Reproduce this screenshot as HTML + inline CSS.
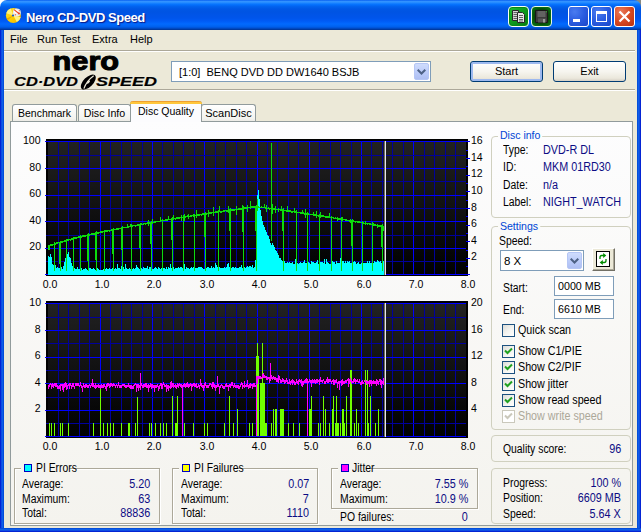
<!DOCTYPE html>
<html><head><meta charset="utf-8"><title>Nero CD-DVD Speed</title>
<style>
*{box-sizing:border-box;margin:0;padding:0}
html,body{width:641px;height:532px;overflow:hidden;background:#ece9d8}
body{font-family:"Liberation Sans",Arial,sans-serif;font-size:11px;color:#000;position:relative}
.abs,.win *{position:absolute}
.win{position:absolute;left:0;top:0;width:641px;height:532px;background:#ece9d8;overflow:hidden}
.title{left:0;top:0;width:641px;height:30px;border-radius:7px 7px 0 0;
 background:linear-gradient(to bottom,#0058ee 0%,#3593ff 4%,#288eff 8%,#127dff 12%,#036ffc 16%,#0262ee 22%,#0057e5 30%,#0054e3 40%,#0055eb 60%,#005bf5 70%,#026afe 80%,#0062ef 88%,#0052d6 93%,#0040ab 97%,#003092 100%)}
.corner{left:0;top:0;width:641px;height:10px;background:linear-gradient(to right,#fff 50%,#8a8a80 50%)}
.ttext{left:26px;top:9px;height:18px;line-height:18px;color:#fff;font-weight:bold;font-size:13px;text-shadow:1px 1px 1px #0a1883;white-space:nowrap;letter-spacing:-0.45px}
.bl{left:0;top:30px;width:4px;height:502px;background:linear-gradient(to right,#0019cf 0,#0831d9 25%,#166aee 50%,#0855dd 75%,#0046d8 100%)}
.br{right:0;top:30px;width:4px;height:502px;background:linear-gradient(to left,#0019cf 0,#0831d9 25%,#166aee 50%,#0855dd 75%,#0046d8 100%)}
.bb{left:0;bottom:0;width:641px;height:4px;background:linear-gradient(to top,#0019cf 0,#0831d9 25%,#166aee 50%,#0855dd 75%,#0046d8 100%)}
.menu span{top:31px;height:16px;line-height:16px;white-space:nowrap}
.etch{left:4px;width:631px;height:2px;border-top:1px solid #aca899;border-bottom:1px solid #fff}
.t{white-space:nowrap;height:14px;line-height:14px;font-size:12px;transform-origin:0 50%;transform:scaleX(.865)}
.t.nv{transform:scaleX(.9)}
.t.r{transform-origin:100% 50%}
.t.ck{transform:scaleX(.894)}
.t.n1{transform:none}
.ax{white-space:nowrap;height:14px;line-height:14px;font-size:11.7px;transform:scaleX(.9)}
.nv{color:#0c0c84}
.charts{left:0;top:0}
.page{left:10px;top:121px;width:623px;height:405px;border:1px solid #919b9c;background:linear-gradient(to bottom,#fdfdfe 0,#f4f3ee 100%)}
.tab{border:1px solid #919b9c;border-bottom:none;border-radius:3px 3px 0 0;background:linear-gradient(to bottom,#fff 0,#f3f3ee 85%,#ecebe6 100%);text-align:center;line-height:17px;white-space:nowrap}
.tabsel{background:#fcfcfe;border-top:none}
.tabsel i{left:-1px;top:0;right:-1px;height:3px;background:linear-gradient(to bottom,#e68b2c 0,#ffc73c 50%,#ffc73c 100%);border-radius:3px 3px 0 0}
.combo{border:1px solid #7f9db9;background:#fff}
.dd{background:linear-gradient(to bottom,#cfdcfd 0,#bdcdfa 50%,#aebff3 100%);border:1px solid #b5c6f5;border-radius:2px}
.btn{border:1px solid #003c74;border-radius:3px;background:linear-gradient(to bottom,#fff 0,#f6f5ef 50%,#ebe8dc 85%,#d6d0c5 100%);text-align:center;line-height:19px}
.gb{border:1px solid #d0d0bf;border-radius:4px}
.lg{color:#0046d5;background:#fcfcfd;padding:0 2px;transform-origin:0 50%;transform:scaleX(.96);white-space:nowrap;height:14px;line-height:14px}
.sq{border:1px solid #aca899;box-shadow:1px 1px 0 #fff, inset 1px 1px 0 #fff}
.inp{border:1px solid #7f9db9;background:#fff}
.cb{width:13px;height:13px;border:1px solid #1c5180;background:linear-gradient(135deg,#dcdcd7 0,#f3f3ef 50%,#fff 100%)}
.r{text-align:right}
</style></head><body>
<div class="win">
<div class="corner"></div>
<div class="title"></div>
<div class="bl"></div><div class="br"></div><div class="bb"></div>
<svg style="left:4px;top:6px" width="20" height="20" viewBox="4 6 20 20"><defs><linearGradient id="dg" x1="0" y1="0" x2="1" y2="1"><stop offset="0" stop-color="#ffe030"/><stop offset="0.5" stop-color="#ffd000"/><stop offset="1" stop-color="#f0b000"/></linearGradient></defs><circle cx="13.4" cy="15.4" r="7.5" fill="url(#dg)"/><path d="M13.4 15.4L6.2 13.2A7.5 7.5 0 0 1 10.6 8.5Z" fill="#fff27a"/><path d="M13.4 15.4L20.7 17.2A7.5 7.5 0 0 1 16.8 22.1Z" fill="#fff27a"/><path d="M13.4 15.4L6.6 18.6L7.6 20.2Z" fill="#e8a800"/><circle cx="16.8" cy="12.4" r="4" fill="#ecebe6"/><circle cx="16.2" cy="11.6" r="2.2" fill="#fff"/><path d="M14 9.6L19.2 13.8" stroke="#f04020" stroke-width="1.1"/><circle cx="19" cy="13.6" r="1" fill="#f04020"/><circle cx="15.4" cy="14.8" r="0.7" fill="#f07050"/><circle cx="19.4" cy="10.6" r="0.6" fill="#f07050"/><circle cx="13" cy="15.5" r="1.1" fill="#1c5ad0"/></svg>

<div class="ttext">Nero CD-DVD Speed</div>
<div style="left:508px;top:6px;width:21px;height:21px;border-radius:4px;border:1px solid #f4fff4;background:linear-gradient(135deg,#22c034 0,#10a020 40%,#047a10 100%);box-shadow:inset 0 0 0 1px #0a8a16"><svg style="left:3px;top:3px" width="14" height="14" viewBox="0 0 14 14"><path d="M0.5 0.5H6.5V10.5H0.5Z" fill="#d4d4d4" stroke="#282828"/><path d="M1.5 2.5H5.5M1.5 4.5H5.5M1.5 6.5H5.5M1.5 8.5H5.5" stroke="#606060"/><path d="M5.5 2.5H10.5L12.5 4.5V12.5H5.5Z" fill="#e8e8e8" stroke="#282828"/><path d="M7 5.5H11M7 7.5H11M7 9.5H11M7 11H11" stroke="#606060"/></svg></div>
<div style="left:531px;top:6px;width:21px;height:21px;border-radius:4px;border:1px solid #e8f8e8;background:radial-gradient(ellipse at 50% 50%,#053005 0,#064a08 55%,#0a8a16 100%);box-shadow:inset 0 0 0 1px #0a6a10"><svg style="left:3px;top:3px" width="14" height="14" viewBox="0 0 14 14"><path d="M0.5 0.5H12.5V12.5H0.5Z" fill="#3c3c3c" stroke="#181818"/><rect x="2.5" y="1" width="8" height="6" fill="#626262"/><rect x="3" y="8.5" width="8" height="4" fill="#565656"/><rect x="8" y="9" width="2" height="3.5" fill="#9a9a9a"/><rect x="11" y="1.3" width="1" height="1" fill="#30c030"/></svg></div>
<div class="cbtn" style="left:568px;top:6px;width:21px;height:21px;border-radius:3px;border:1px solid #fff;background:radial-gradient(circle at 30% 25%,#4a7cf0 0,#2a5ce0 50%,#1a46c8 100%)"><div style="left:4px;top:12px;width:7px;height:3px;background:#fff"></div></div>
<div class="cbtn" style="left:591px;top:6px;width:21px;height:21px;border-radius:3px;border:1px solid #fff;background:radial-gradient(circle at 30% 25%,#4a7cf0 0,#2a5ce0 50%,#1a46c8 100%)"><div style="left:4px;top:4px;width:11px;height:11px;border:1px solid #fff;border-top-width:3px"></div></div>
<div class="cbtn" style="left:614px;top:6px;width:21px;height:21px;border-radius:3px;border:1px solid #fff;background:radial-gradient(circle at 30% 25%,#ea7a5a 0,#d84a22 50%,#b8300e 100%)"><svg style="left:3px;top:3px" width="13" height="13" viewBox="0 0 13 13"><path d="M1.5 1.5L11.5 11.5M11.5 1.5L1.5 11.5" stroke="#fff" stroke-width="2.2"/></svg></div>

<div class="menu"><span style="left:10px">File</span><span style="left:37px">Run Test</span><span style="left:92px">Extra</span><span style="left:130px">Help</span></div>
<div class="etch" style="top:50px"></div>
<div class="etch" style="top:89px"></div>
<svg style="left:8px;top:51px" width="160" height="40" viewBox="8 51 160 40" font-family="'Liberation Sans',Arial,sans-serif" font-weight="bold"><text x="52.6" y="70.4" font-size="26.6" textLength="66.5" lengthAdjust="spacingAndGlyphs" stroke="#000" stroke-width="1.1" stroke-linejoin="round">nero</text><g font-style="italic" font-size="12" stroke="#000" stroke-width="0.15"><text x="14" y="86.3" textLength="64" lengthAdjust="spacingAndGlyphs">CD·DVD</text><text x="96" y="86.3" textLength="61" lengthAdjust="spacingAndGlyphs">SPEED</text></g><g transform="rotate(-45 88.3 82)"><ellipse cx="88.3" cy="82" rx="9.4" ry="4.8" fill="#000"/><path d="M80.5 83.6Q88 80 96.5 81.4" fill="none" stroke="#ece9d8" stroke-width="1.2"/><ellipse cx="88.3" cy="82.2" rx="2" ry="0.9" fill="#ece9d8"/></g></svg>

<div class="combo" style="left:171px;top:61px;width:260px;height:21px"><div class="t n1" style="left:7px;top:3px;font-size:11px">[1:0]&nbsp; BENQ DVD DD DW1640 BSJB</div><div class="dd" style="right:1px;top:1px;width:15px;height:17px"><svg style="left:2px;top:5px" width="9" height="6" viewBox="0 0 9 6"><path d="M0.7 0.7L4.5 4.5L8.3 0.7" fill="none" stroke="#4d6185" stroke-width="2"/></svg></div></div>
<div class="btn" style="left:470px;top:61px;width:73px;height:21px;box-shadow:inset 0 0 0 2px #9db9ef"><span style="left:0;right:0;top:0">Start</span></div>
<div class="btn" style="left:553px;top:61px;width:73px;height:21px"><span style="left:0;right:0;top:0">Exit</span></div>

<div class="page"></div>
<div class="tab" style="left:12px;top:104px;width:65px;height:17px"><span style="left:0;right:0;top:0;transform:scaleX(.95)">Benchmark</span></div>
<div class="tab" style="left:78px;top:104px;width:53px;height:17px"><span style="left:0;right:0;top:0;transform:scaleX(.97)">Disc Info</span></div>
<div class="tab" style="left:201px;top:104px;width:55px;height:17px"><span style="left:0;right:0;top:0">ScanDisc</span></div>
<div class="tab tabsel" style="left:130px;top:101px;width:72px;height:21px"><i></i><span style="left:0;right:0;top:2px;transform:scaleX(.955)">Disc Quality</span></div>

<svg class="charts" width="641" height="532" viewBox="0 0 641 532" shape-rendering="crispEdges"><defs><linearGradient id="bg" x1="0" y1="0" x2="0" y2="1"><stop offset="0" stop-color="#222"/><stop offset="1" stop-color="#000"/></linearGradient></defs><g><rect x="46" y="139" width="422" height="137" fill="#000"/><rect x="48" y="141" width="418" height="134" fill="url(#bg)"/><rect x="58" y="141" width="1" height="134" fill="#00009c"/><rect x="68" y="141" width="1" height="134" fill="#00009c"/><rect x="79" y="141" width="1" height="134" fill="#00009c"/><rect x="89" y="141" width="1" height="134" fill="#00009c"/><rect x="100" y="141" width="1" height="134" fill="#0000ff"/><rect x="110" y="141" width="1" height="134" fill="#00009c"/><rect x="121" y="141" width="1" height="134" fill="#00009c"/><rect x="131" y="141" width="1" height="134" fill="#00009c"/><rect x="142" y="141" width="1" height="134" fill="#00009c"/><rect x="152" y="141" width="1" height="134" fill="#0000ff"/><rect x="162" y="141" width="1" height="134" fill="#00009c"/><rect x="173" y="141" width="1" height="134" fill="#00009c"/><rect x="183" y="141" width="1" height="134" fill="#00009c"/><rect x="194" y="141" width="1" height="134" fill="#00009c"/><rect x="204" y="141" width="1" height="134" fill="#0000ff"/><rect x="215" y="141" width="1" height="134" fill="#00009c"/><rect x="225" y="141" width="1" height="134" fill="#00009c"/><rect x="236" y="141" width="1" height="134" fill="#00009c"/><rect x="246" y="141" width="1" height="134" fill="#00009c"/><rect x="257" y="141" width="1" height="134" fill="#0000ff"/><rect x="267" y="141" width="1" height="134" fill="#00009c"/><rect x="277" y="141" width="1" height="134" fill="#00009c"/><rect x="288" y="141" width="1" height="134" fill="#00009c"/><rect x="298" y="141" width="1" height="134" fill="#00009c"/><rect x="309" y="141" width="1" height="134" fill="#0000ff"/><rect x="319" y="141" width="1" height="134" fill="#00009c"/><rect x="330" y="141" width="1" height="134" fill="#00009c"/><rect x="340" y="141" width="1" height="134" fill="#00009c"/><rect x="351" y="141" width="1" height="134" fill="#00009c"/><rect x="361" y="141" width="1" height="134" fill="#0000ff"/><rect x="371" y="141" width="1" height="134" fill="#00009c"/><rect x="382" y="141" width="1" height="134" fill="#00009c"/><rect x="392" y="141" width="1" height="134" fill="#00009c"/><rect x="403" y="141" width="1" height="134" fill="#00009c"/><rect x="413" y="141" width="1" height="134" fill="#0000ff"/><rect x="424" y="141" width="1" height="134" fill="#00009c"/><rect x="434" y="141" width="1" height="134" fill="#00009c"/><rect x="445" y="141" width="1" height="134" fill="#00009c"/><rect x="455" y="141" width="1" height="134" fill="#00009c"/><rect x="45" y="141" width="421" height="1" fill="#0000ff"/><rect x="46" y="155" width="420" height="1" fill="#00009c"/><rect x="45" y="168" width="421" height="1" fill="#0000ff"/><rect x="46" y="181" width="420" height="1" fill="#00009c"/><rect x="45" y="195" width="421" height="1" fill="#0000ff"/><rect x="46" y="208" width="420" height="1" fill="#00009c"/><rect x="45" y="221" width="421" height="1" fill="#0000ff"/><rect x="46" y="235" width="420" height="1" fill="#00009c"/><rect x="45" y="248" width="421" height="1" fill="#0000ff"/><rect x="46" y="261" width="420" height="1" fill="#00009c"/><rect x="45" y="274" width="421" height="1" fill="#0000ff"/><rect x="466" y="274" width="4" height="1" fill="#0000ff"/><rect x="466" y="266" width="2" height="1" fill="#0000ff"/><rect x="466" y="258" width="4" height="1" fill="#0000ff"/><rect x="466" y="250" width="2" height="1" fill="#0000ff"/><rect x="466" y="241" width="4" height="1" fill="#0000ff"/><rect x="466" y="233" width="2" height="1" fill="#0000ff"/><rect x="466" y="225" width="4" height="1" fill="#0000ff"/><rect x="466" y="216" width="2" height="1" fill="#0000ff"/><rect x="466" y="208" width="4" height="1" fill="#0000ff"/><rect x="466" y="200" width="2" height="1" fill="#0000ff"/><rect x="466" y="191" width="4" height="1" fill="#0000ff"/><rect x="466" y="183" width="2" height="1" fill="#0000ff"/><rect x="466" y="175" width="4" height="1" fill="#0000ff"/><rect x="466" y="166" width="2" height="1" fill="#0000ff"/><rect x="466" y="158" width="4" height="1" fill="#0000ff"/><rect x="466" y="150" width="2" height="1" fill="#0000ff"/><rect x="466" y="141" width="4" height="1" fill="#0000ff"/><path d="M48 274V255.7h1V256.7h1V253.9h1V257.1h1V264.4h1V264.9h1V265.8h1V264.5h1V267.9h1V266.7h1V267.8h1V267.7h1V266.7h1V267.2h1V268.9h1V265.7h1V261.8h1V258.2h1V256.2h1V253.7h1V252.3h1V257.4h1V258.4h1V262.7h1V265.9h1V269.9h1V268.4h1V268.9h1V269.3h1V267.4h1V268.6h1V269.4h1V269.1h1V268.4h1V269.6h1V268.9h1V268.5h1V267.9h1V269.1h1V269.7h1V269.9h1V268.3h1V268.1h1V268.5h1V268.7h1V268.1h1V268.9h1V269.8h1V268.5h1V268.1h1V269.0h1V269.8h1V269.5h1V269.7h1V269.6h1V269.0h1V269.6h1V268.6h1V268.0h1V269.2h1V269.0h1V267.7h1V269.4h1V269.2h1V268.4h1V269.7h1V268.9h1V267.6h1V268.5h1V263.5h1V267.9h1V267.9h1V268.8h1V266.0h1V269.1h1V266.8h1V269.3h1V264.1h1V268.2h1V269.0h1V268.7h1V267.7h1V268.5h1V269.3h1V268.7h1V267.7h1V269.4h1V268.3h1V264.7h1V267.3h1V267.9h1V268.6h1V267.7h1V267.7h1V268.9h1V267.2h1V267.6h1V267.7h1V268.2h1V266.4h1V268.7h1V267.2h1V267.2h1V267.2h1V268.8h1V268.8h1V267.8h1V267.4h1V267.8h1V269.0h1V267.2h1V267.5h1V268.8h1V268.4h1V267.0h1V268.2h1V267.5h1V268.8h1V267.1h1V268.7h1V266.9h1V268.3h1V263.8h1V267.6h1V266.9h1V267.1h1V268.5h1V268.3h1V267.7h1V268.0h1V266.9h1V267.9h1V266.9h1V266.9h1V267.7h1V268.8h1V264.1h1V268.5h1V267.2h1V268.1h1V267.6h1V268.6h1V268.2h1V267.1h1V267.5h1V266.7h1V267.4h1V267.6h1V267.7h1V267.6h1V267.2h1V266.6h1V267.4h1V266.8h1V268.4h1V268.5h1V268.5h1V266.9h1V268.3h1V267.1h1V266.6h1V268.1h1V267.7h1V266.4h1V268.2h1V267.4h1V268.1h1V263.2h1V264.5h1V267.1h1V268.3h1V266.7h1V268.2h1V268.3h1V267.8h1V267.5h1V266.6h1V268.0h1V267.1h1V264.1h1V262.6h1V266.9h1V268.1h1V268.1h1V267.3h1V267.0h1V267.7h1V267.1h1V268.0h1V268.1h1V267.5h1V266.5h1V267.1h1V264.7h1V268.1h1V266.9h1V267.1h1V267.9h1V267.2h1V266.3h1V267.0h1V265.9h1V266.2h1V266.6h1V264.9h1V267.9h1V267.4h1V260.0h1V208.0h1V195.0h1V190.2h1V199.1h1V209.6h1V215.7h1V221.0h1V225.2h1V227.0h1V230.0h1V231.6h1V234.5h1V235.8h1V238.7h1V242.7h1V244.7h1V243.2h1V245.0h1V247.0h1V250.0h1V251.2h1V253.2h1V255.3h1V257.9h1V258.2h1V260.4h1V260.8h1V261.9h1V261.4h1V262.5h1V262.7h1V262.3h1V262.7h1V262.1h1V263.3h1V262.9h1V262.2h1V263.9h1V264.4h1V259.2h1V262.1h1V262.6h1V264.4h1V263.3h1V262.3h1V263.0h1V262.7h1V261.8h1V259.9h1V263.0h1V262.8h1V259.6h1V262.4h1V263.0h1V264.4h1V261.3h1V262.4h1V262.3h1V263.1h1V263.1h1V262.2h1V260.3h1V263.7h1V263.6h1V261.9h1V262.4h1V262.4h1V262.9h1V259.2h1V263.8h1V258.6h1V261.9h1V263.0h1V263.7h1V263.7h1V263.9h1V261.4h1V261.8h1V261.6h1V263.5h1V260.8h1V262.7h1V263.3h1V263.1h1V258.1h1V261.6h1V261.4h1V261.4h1V263.0h1V261.1h1V263.0h1V261.0h1V261.5h1V261.2h1V263.2h1V263.4h1V261.1h1V261.5h1V261.2h1V262.3h1V263.8h1V262.6h1V262.0h1V263.7h1V263.5h1V262.8h1V261.6h1V263.0h1V262.9h1V262.6h1V263.3h1V261.0h1V263.1h1V260.7h1V263.3h1V263.4h1V263.4h1V262.9h1V261.0h1V262.4h1V262.0h1V260.0h1V260.7h1V262.1h1V261.0h1V262.7h1V262.3h1V260.7h1V258.8h1V261.4h1V275H48Z" fill="#00ffff"/><path d="M48 245.5h1.5V250h-1.5ZM48 244.90h1V246.72h-1ZM49 244.65h1V246.47h-1ZM50 243.99h1V245.80h-1ZM51 243.91h1V245.72h-1ZM52 243.93h1V245.74h-1ZM53 243.57h1V245.37h-1ZM54 243.28h1V245.08h-1ZM55 243.06h1V244.85h-1ZM56 242.33h1V244.12h-1ZM57 241.95h1V243.75h-1ZM58 241.69h1V243.48h-1ZM59 241.63h1V243.41h-1ZM60 241.44h1V243.22h-1ZM61 241.32h1V243.10h-1ZM62 240.91h1V242.68h-1ZM63 240.58h1V242.36h-1ZM64 240.38h1V242.16h-1ZM65 239.93h1V241.70h-1ZM66 239.71h1V241.48h-1ZM67 239.14h1V240.91h-1ZM68 239.32h1V241.08h-1ZM69 238.73h1V240.49h-1ZM70 238.88h1V240.64h-1ZM71 238.45h1V240.21h-1ZM72 237.99h1V239.75h-1ZM73 237.63h1V239.39h-1ZM74 237.45h1V239.21h-1ZM75 237.43h1V239.18h-1ZM76 237.22h1V238.97h-1ZM77 236.62h1V238.37h-1ZM78 236.35h1V238.09h-1ZM79 236.37h1V238.12h-1ZM80 236.17h1V237.91h-1ZM81 235.81h1V237.55h-1ZM82 235.47h1V237.21h-1ZM83 235.46h1V237.20h-1ZM84 234.87h1V236.60h-1ZM85 234.80h1V236.54h-1ZM86 234.67h1V236.40h-1ZM87 234.73h1V236.47h-1ZM88 234.31h1V236.04h-1ZM89 234.23h1V235.96h-1ZM90 233.75h1V235.48h-1ZM91 233.38h1V235.11h-1ZM92 233.16h1V234.89h-1ZM93 233.37h1V235.09h-1ZM94 232.99h1V234.71h-1ZM95 232.53h1V234.25h-1ZM96 232.13h1V233.86h-1ZM97 232.20h1V233.92h-1ZM98 232.09h1V233.81h-1ZM99 231.72h1V233.44h-1ZM100 231.40h1V233.12h-1ZM101 231.43h1V233.15h-1ZM102 231.37h1V233.09h-1ZM103 230.74h1V232.46h-1ZM104 230.41h1V232.13h-1ZM105 230.39h1V232.10h-1ZM106 230.23h1V231.94h-1ZM107 230.17h1V231.88h-1ZM108 229.68h1V231.38h-1ZM109 229.83h1V231.53h-1ZM110 229.59h1V231.29h-1ZM111 229.24h1V230.95h-1ZM112 228.86h1V230.56h-1ZM113 229.11h1V230.82h-1ZM114 228.52h1V230.22h-1ZM115 228.62h1V230.32h-1ZM116 228.07h1V229.77h-1ZM117 227.86h1V229.56h-1ZM118 227.99h1V229.68h-1ZM119 227.51h1V229.21h-1ZM120 227.71h1V229.40h-1ZM121 227.24h1V228.93h-1ZM122 226.86h1V228.55h-1ZM123 226.68h1V228.38h-1ZM124 226.61h1V228.30h-1ZM125 226.56h1V228.25h-1ZM126 226.54h1V228.23h-1ZM127 225.87h1V227.56h-1ZM128 225.82h1V227.52h-1ZM129 225.53h1V227.22h-1ZM130 225.79h1V227.48h-1ZM131 225.11h1V226.80h-1ZM132 224.87h1V226.55h-1ZM133 224.68h1V226.37h-1ZM134 224.70h1V226.38h-1ZM135 224.82h1V226.50h-1ZM136 224.62h1V226.31h-1ZM137 224.35h1V226.03h-1ZM138 224.32h1V226.01h-1ZM139 224.10h1V225.78h-1ZM140 223.56h1V225.24h-1ZM141 223.29h1V224.97h-1ZM142 223.56h1V225.24h-1ZM143 223.27h1V224.95h-1ZM144 222.66h1V224.34h-1ZM145 222.86h1V224.54h-1ZM146 222.51h1V224.19h-1ZM147 222.33h1V224.01h-1ZM148 222.13h1V223.80h-1ZM149 221.85h1V223.53h-1ZM150 221.58h1V223.25h-1ZM151 221.57h1V223.25h-1ZM152 221.44h1V223.11h-1ZM153 221.63h1V223.30h-1ZM154 220.96h1V222.63h-1ZM155 221.29h1V222.96h-1ZM156 220.66h1V222.33h-1ZM157 220.58h1V222.25h-1ZM158 220.69h1V222.36h-1ZM159 220.52h1V222.19h-1ZM160 220.11h1V221.78h-1ZM161 219.71h1V221.38h-1ZM162 219.80h1V221.47h-1ZM163 219.57h1V221.24h-1ZM164 219.73h1V221.40h-1ZM165 219.13h1V220.80h-1ZM166 219.06h1V220.73h-1ZM167 219.22h1V220.88h-1ZM168 218.53h1V220.20h-1ZM169 218.60h1V220.26h-1ZM170 218.67h1V220.34h-1ZM171 218.48h1V220.14h-1ZM172 217.88h1V219.54h-1ZM173 217.71h1V219.38h-1ZM174 217.57h1V219.23h-1ZM175 217.92h1V219.58h-1ZM176 217.36h1V219.02h-1ZM177 217.49h1V219.16h-1ZM178 217.42h1V219.08h-1ZM179 216.93h1V218.59h-1ZM180 216.73h1V218.39h-1ZM181 216.98h1V218.64h-1ZM182 216.62h1V218.28h-1ZM183 216.25h1V217.90h-1ZM184 216.36h1V218.02h-1ZM185 215.96h1V217.62h-1ZM186 215.78h1V217.44h-1ZM187 215.46h1V217.12h-1ZM188 215.76h1V217.41h-1ZM189 215.70h1V217.35h-1ZM190 215.37h1V217.03h-1ZM191 215.40h1V217.06h-1ZM192 214.70h1V216.35h-1ZM193 214.67h1V216.32h-1ZM194 214.66h1V216.31h-1ZM195 214.79h1V216.45h-1ZM196 214.64h1V216.29h-1ZM197 214.14h1V215.80h-1ZM198 213.91h1V215.56h-1ZM199 213.87h1V215.52h-1ZM200 213.75h1V215.40h-1ZM201 213.86h1V215.51h-1ZM202 213.27h1V214.92h-1ZM203 213.49h1V215.14h-1ZM204 213.30h1V214.95h-1ZM205 213.20h1V214.85h-1ZM206 213.02h1V214.67h-1ZM207 212.77h1V214.42h-1ZM208 212.46h1V214.10h-1ZM209 212.30h1V213.95h-1ZM210 212.18h1V213.83h-1ZM211 212.28h1V213.93h-1ZM212 211.72h1V213.36h-1ZM213 211.64h1V213.29h-1ZM214 211.83h1V213.47h-1ZM215 211.38h1V213.02h-1ZM216 211.12h1V212.77h-1ZM217 210.96h1V212.60h-1ZM218 211.12h1V212.77h-1ZM219 210.84h1V212.49h-1ZM220 211.09h1V212.74h-1ZM221 210.89h1V212.53h-1ZM222 210.81h1V212.45h-1ZM223 210.23h1V211.88h-1ZM224 209.98h1V211.62h-1ZM225 209.85h1V211.49h-1ZM226 209.94h1V211.59h-1ZM227 209.93h1V211.57h-1ZM228 209.63h1V211.27h-1ZM229 209.36h1V211.00h-1ZM230 209.33h1V210.97h-1ZM231 209.31h1V210.95h-1ZM232 209.20h1V210.84h-1ZM233 209.11h1V210.75h-1ZM234 209.03h1V210.67h-1ZM235 208.78h1V210.42h-1ZM236 208.31h1V209.95h-1ZM237 208.60h1V210.24h-1ZM238 208.14h1V209.78h-1ZM239 208.16h1V209.80h-1ZM240 207.91h1V209.55h-1ZM241 207.99h1V209.63h-1ZM242 207.53h1V209.17h-1ZM243 207.42h1V209.06h-1ZM244 207.28h1V208.92h-1ZM245 207.09h1V208.73h-1ZM246 207.39h1V209.03h-1ZM247 207.07h1V208.71h-1ZM248 206.79h1V208.42h-1ZM249 206.69h1V208.33h-1ZM250 206.92h1V208.55h-1ZM251 206.49h1V208.12h-1ZM252 206.19h1V207.82h-1ZM253 206.40h1V208.04h-1ZM254 206.17h1V207.81h-1ZM255 206.24h1V207.88h-1ZM256 205.71h1V207.29h-1ZM257 206.01h1V207.64h-1ZM258 206.35h1V207.98h-1ZM259 206.50h1V208.13h-1ZM260 206.68h1V208.31h-1ZM261 206.29h1V207.92h-1ZM262 206.57h1V208.21h-1ZM263 206.60h1V208.24h-1ZM264 206.78h1V208.42h-1ZM265 207.39h1V209.02h-1ZM266 207.29h1V208.93h-1ZM267 207.63h1V209.27h-1ZM268 207.44h1V209.07h-1ZM269 207.87h1V209.51h-1ZM270 207.76h1V209.39h-1ZM271 207.78h1V209.42h-1ZM272 208.23h1V209.87h-1ZM273 208.47h1V210.11h-1ZM274 208.10h1V209.74h-1ZM275 208.54h1V210.18h-1ZM276 208.69h1V210.33h-1ZM277 208.59h1V210.23h-1ZM278 208.82h1V210.46h-1ZM279 208.82h1V210.46h-1ZM280 209.00h1V210.64h-1ZM281 209.17h1V210.81h-1ZM282 209.52h1V211.16h-1ZM283 209.69h1V211.33h-1ZM284 209.56h1V211.21h-1ZM285 209.59h1V211.23h-1ZM286 209.92h1V211.56h-1ZM287 210.28h1V211.92h-1ZM288 210.12h1V211.77h-1ZM289 210.34h1V211.99h-1ZM290 210.42h1V212.06h-1ZM291 210.92h1V212.56h-1ZM292 210.92h1V212.56h-1ZM293 210.77h1V212.41h-1ZM294 210.94h1V212.58h-1ZM295 211.26h1V212.90h-1ZM296 211.50h1V213.14h-1ZM297 211.70h1V213.34h-1ZM298 211.51h1V213.16h-1ZM299 211.70h1V213.35h-1ZM300 212.17h1V213.82h-1ZM301 212.15h1V213.79h-1ZM302 212.22h1V213.86h-1ZM303 212.38h1V214.03h-1ZM304 212.92h1V214.56h-1ZM305 212.68h1V214.33h-1ZM306 212.98h1V214.63h-1ZM307 213.00h1V214.65h-1ZM308 213.19h1V214.84h-1ZM309 213.61h1V215.26h-1ZM310 213.84h1V215.49h-1ZM311 213.61h1V215.26h-1ZM312 213.66h1V215.31h-1ZM313 214.13h1V215.78h-1ZM314 213.97h1V215.62h-1ZM315 214.00h1V215.66h-1ZM316 214.69h1V216.35h-1ZM317 214.56h1V216.21h-1ZM318 214.95h1V216.61h-1ZM319 214.86h1V216.51h-1ZM320 215.30h1V216.95h-1ZM321 215.20h1V216.86h-1ZM322 215.18h1V216.83h-1ZM323 215.24h1V216.90h-1ZM324 215.72h1V217.38h-1ZM325 215.93h1V217.59h-1ZM326 216.25h1V217.91h-1ZM327 215.91h1V217.57h-1ZM328 216.39h1V218.05h-1ZM329 216.40h1V218.06h-1ZM330 216.64h1V218.30h-1ZM331 216.58h1V218.24h-1ZM332 216.83h1V218.49h-1ZM333 217.13h1V218.79h-1ZM334 217.53h1V219.19h-1ZM335 217.20h1V218.86h-1ZM336 217.59h1V219.26h-1ZM337 217.94h1V219.61h-1ZM338 218.20h1V219.87h-1ZM339 217.90h1V219.57h-1ZM340 218.03h1V219.69h-1ZM341 218.68h1V220.34h-1ZM342 218.86h1V220.53h-1ZM343 218.73h1V220.40h-1ZM344 218.64h1V220.31h-1ZM345 219.33h1V221.00h-1ZM346 219.17h1V220.84h-1ZM347 219.65h1V221.32h-1ZM348 219.65h1V221.32h-1ZM349 219.94h1V221.61h-1ZM350 219.71h1V221.38h-1ZM351 220.25h1V221.92h-1ZM352 220.08h1V221.75h-1ZM353 220.36h1V222.03h-1ZM354 220.80h1V222.47h-1ZM355 220.96h1V222.63h-1ZM356 220.74h1V222.42h-1ZM357 220.94h1V222.61h-1ZM358 221.22h1V222.89h-1ZM359 221.46h1V223.14h-1ZM360 221.56h1V223.23h-1ZM361 221.58h1V223.25h-1ZM362 221.82h1V223.50h-1ZM363 222.29h1V223.96h-1ZM364 222.57h1V224.24h-1ZM365 222.23h1V223.91h-1ZM366 222.72h1V224.40h-1ZM367 223.02h1V224.70h-1ZM368 222.76h1V224.44h-1ZM369 223.42h1V225.10h-1ZM370 223.17h1V224.85h-1ZM371 223.64h1V225.32h-1ZM372 223.79h1V225.48h-1ZM373 224.02h1V225.70h-1ZM374 224.01h1V225.70h-1ZM375 224.26h1V225.95h-1ZM376 224.55h1V226.23h-1ZM377 224.64h1V226.32h-1ZM378 224.96h1V226.65h-1ZM379 225.02h1V226.71h-1ZM380 225.20h1V226.89h-1ZM381 225.14h1V226.83h-1ZM382 225.69h1V227.38h-1ZM383 225.80h1V227.49h-1ZM383 226.6h1.5v4.5h-1.5Z" fill="#0cdc0c"/><line x1="54.5" y1="242.3" x2="54.5" y2="271" stroke="#0cdc0c" stroke-width="1"/><line x1="60.5" y1="240.5" x2="60.5" y2="271" stroke="#0cdc0c" stroke-width="1"/><line x1="60.0" y1="241.5" x2="60.0" y2="264.3" stroke="#0cdc0c" stroke-width="2.2"/><line x1="66.5" y1="238.6" x2="66.5" y2="271" stroke="#0cdc0c" stroke-width="1"/><line x1="73.5" y1="236.8" x2="73.5" y2="271" stroke="#0cdc0c" stroke-width="1"/><line x1="80.5" y1="235.2" x2="80.5" y2="271" stroke="#0cdc0c" stroke-width="1"/><line x1="88.5" y1="233.3" x2="88.5" y2="271" stroke="#0cdc0c" stroke-width="1"/><line x1="88.0" y1="234.3" x2="88.0" y2="261.4" stroke="#0cdc0c" stroke-width="2.2"/><line x1="96.5" y1="231.4" x2="96.5" y2="271" stroke="#0cdc0c" stroke-width="1"/><line x1="96.0" y1="232.4" x2="96.0" y2="259.6" stroke="#0cdc0c" stroke-width="2.2"/><line x1="104.5" y1="229.6" x2="104.5" y2="271" stroke="#0cdc0c" stroke-width="1"/><line x1="113.5" y1="227.8" x2="113.5" y2="271" stroke="#0cdc0c" stroke-width="1"/><line x1="113.0" y1="228.8" x2="113.0" y2="253.5" stroke="#0cdc0c" stroke-width="2.2"/><line x1="122.5" y1="226.1" x2="122.5" y2="271" stroke="#0cdc0c" stroke-width="1"/><line x1="122.0" y1="227.1" x2="122.0" y2="249.5" stroke="#0cdc0c" stroke-width="2.2"/><line x1="131.5" y1="224.2" x2="131.5" y2="271" stroke="#0cdc0c" stroke-width="1"/><line x1="140.5" y1="222.6" x2="140.5" y2="271" stroke="#0cdc0c" stroke-width="1"/><line x1="140.0" y1="223.6" x2="140.0" y2="248.4" stroke="#0cdc0c" stroke-width="2.2"/><line x1="151.5" y1="220.6" x2="151.5" y2="271" stroke="#0cdc0c" stroke-width="1"/><line x1="151.0" y1="221.6" x2="151.0" y2="243.5" stroke="#0cdc0c" stroke-width="2.2"/><line x1="162.5" y1="218.8" x2="162.5" y2="271" stroke="#0cdc0c" stroke-width="1"/><line x1="172.5" y1="217.0" x2="172.5" y2="271" stroke="#0cdc0c" stroke-width="1"/><line x1="172.0" y1="218.0" x2="172.0" y2="240.1" stroke="#0cdc0c" stroke-width="2.2"/><line x1="183.5" y1="215.3" x2="183.5" y2="271" stroke="#0cdc0c" stroke-width="1"/><line x1="194.5" y1="213.6" x2="194.5" y2="271" stroke="#0cdc0c" stroke-width="1"/><line x1="205.5" y1="211.8" x2="205.5" y2="271" stroke="#0cdc0c" stroke-width="1"/><line x1="205.0" y1="212.8" x2="205.0" y2="237.3" stroke="#0cdc0c" stroke-width="2.2"/><line x1="218.5" y1="210.1" x2="218.5" y2="271" stroke="#0cdc0c" stroke-width="1"/><line x1="230.5" y1="208.3" x2="230.5" y2="271" stroke="#0cdc0c" stroke-width="1"/><line x1="230.0" y1="209.3" x2="230.0" y2="231.0" stroke="#0cdc0c" stroke-width="2.2"/><line x1="243.5" y1="206.4" x2="243.5" y2="271" stroke="#0cdc0c" stroke-width="1"/><line x1="243.0" y1="207.4" x2="243.0" y2="232.0" stroke="#0cdc0c" stroke-width="2.2"/><line x1="256.5" y1="204.7" x2="256.5" y2="271" stroke="#0cdc0c" stroke-width="1"/><line x1="256.0" y1="205.7" x2="256.0" y2="230.8" stroke="#0cdc0c" stroke-width="2.2"/><line x1="283.5" y1="208.3" x2="283.5" y2="271" stroke="#0cdc0c" stroke-width="1"/><line x1="283.0" y1="209.3" x2="283.0" y2="230.6" stroke="#0cdc0c" stroke-width="2.2"/><line x1="296.5" y1="210.1" x2="296.5" y2="271" stroke="#0cdc0c" stroke-width="1"/><line x1="307.5" y1="211.8" x2="307.5" y2="271" stroke="#0cdc0c" stroke-width="1"/><line x1="319.5" y1="213.7" x2="319.5" y2="271" stroke="#0cdc0c" stroke-width="1"/><line x1="331.5" y1="215.5" x2="331.5" y2="271" stroke="#0cdc0c" stroke-width="1"/><line x1="341.5" y1="217.2" x2="341.5" y2="271" stroke="#0cdc0c" stroke-width="1"/><line x1="352.5" y1="218.9" x2="352.5" y2="271" stroke="#0cdc0c" stroke-width="1"/><line x1="352.0" y1="219.9" x2="352.0" y2="246.0" stroke="#0cdc0c" stroke-width="2.2"/><line x1="362.5" y1="220.7" x2="362.5" y2="271" stroke="#0cdc0c" stroke-width="1"/><line x1="372.5" y1="222.4" x2="372.5" y2="271" stroke="#0cdc0c" stroke-width="1"/><line x1="382.5" y1="224.3" x2="382.5" y2="271" stroke="#0cdc0c" stroke-width="1"/><line x1="382.0" y1="225.3" x2="382.0" y2="247.0" stroke="#0cdc0c" stroke-width="2.2"/><line x1="271.5" y1="143" x2="271.5" y2="241" stroke="#0cdc0c" stroke-width="1"/><line x1="127.5" y1="224.4" x2="127.5" y2="228.2" stroke="#0cdc0c" stroke-width="1"/><line x1="130.5" y1="224.4" x2="130.5" y2="227.4" stroke="#0cdc0c" stroke-width="1"/><line x1="139.5" y1="223.5" x2="139.5" y2="227.1" stroke="#0cdc0c" stroke-width="1"/><line x1="148.5" y1="220.2" x2="148.5" y2="225.6" stroke="#0cdc0c" stroke-width="1"/><line x1="152.5" y1="218.8" x2="152.5" y2="224.0" stroke="#0cdc0c" stroke-width="1"/><line x1="160.5" y1="217.2" x2="160.5" y2="221.6" stroke="#0cdc0c" stroke-width="1"/><line x1="168.5" y1="215.6" x2="168.5" y2="220.0" stroke="#0cdc0c" stroke-width="1"/><line x1="173.5" y1="215.2" x2="173.5" y2="219.5" stroke="#0cdc0c" stroke-width="1"/><line x1="181.5" y1="215.2" x2="181.5" y2="220.8" stroke="#0cdc0c" stroke-width="1"/><line x1="184.5" y1="213.8" x2="184.5" y2="220.8" stroke="#0cdc0c" stroke-width="1"/><line x1="188.5" y1="214.0" x2="188.5" y2="218.5" stroke="#0cdc0c" stroke-width="1"/><line x1="193.5" y1="214.0" x2="193.5" y2="216.5" stroke="#0cdc0c" stroke-width="1"/><line x1="196.5" y1="210.0" x2="196.5" y2="218.2" stroke="#0cdc0c" stroke-width="1"/><line x1="205.5" y1="211.5" x2="205.5" y2="217.6" stroke="#0cdc0c" stroke-width="1"/><line x1="208.5" y1="209.5" x2="208.5" y2="216.5" stroke="#0cdc0c" stroke-width="1"/><line x1="213.5" y1="207.2" x2="213.5" y2="215.5" stroke="#0cdc0c" stroke-width="1"/><line x1="219.5" y1="206.0" x2="219.5" y2="212.4" stroke="#0cdc0c" stroke-width="1"/><line x1="228.5" y1="205.5" x2="228.5" y2="212.7" stroke="#0cdc0c" stroke-width="1"/><line x1="236.5" y1="206.0" x2="236.5" y2="215.1" stroke="#0cdc0c" stroke-width="1"/><line x1="242.5" y1="204.5" x2="242.5" y2="213.1" stroke="#0cdc0c" stroke-width="1"/><line x1="247.5" y1="204.6" x2="247.5" y2="212.4" stroke="#0cdc0c" stroke-width="1"/><line x1="250.5" y1="200.7" x2="250.5" y2="209.1" stroke="#0cdc0c" stroke-width="1"/><line x1="257.5" y1="198.9" x2="257.5" y2="210.5" stroke="#0cdc0c" stroke-width="1"/><line x1="264.5" y1="203.7" x2="264.5" y2="207.7" stroke="#0cdc0c" stroke-width="1"/><line x1="266.5" y1="205.0" x2="266.5" y2="211.8" stroke="#0cdc0c" stroke-width="1"/><line x1="272.5" y1="203.9" x2="272.5" y2="214.0" stroke="#0cdc0c" stroke-width="1"/><line x1="275.5" y1="205.9" x2="275.5" y2="213.0" stroke="#0cdc0c" stroke-width="1"/><line x1="278.5" y1="207.5" x2="278.5" y2="211.6" stroke="#0cdc0c" stroke-width="1"/><line x1="281.5" y1="206.2" x2="281.5" y2="211.3" stroke="#0cdc0c" stroke-width="1"/><line x1="287.5" y1="206.2" x2="287.5" y2="212.0" stroke="#0cdc0c" stroke-width="1"/><line x1="294.5" y1="207.8" x2="294.5" y2="212.6" stroke="#0cdc0c" stroke-width="1"/><line x1="302.5" y1="210.3" x2="302.5" y2="213.9" stroke="#0cdc0c" stroke-width="1"/><line x1="305.5" y1="209.2" x2="305.5" y2="217.7" stroke="#0cdc0c" stroke-width="1"/><line x1="313.5" y1="211.5" x2="313.5" y2="215.9" stroke="#0cdc0c" stroke-width="1"/><line x1="316.5" y1="211.0" x2="316.5" y2="217.6" stroke="#0cdc0c" stroke-width="1"/><line x1="320.5" y1="211.9" x2="320.5" y2="217.8" stroke="#0cdc0c" stroke-width="1"/><line x1="329.5" y1="213.2" x2="329.5" y2="218.2" stroke="#0cdc0c" stroke-width="1"/><line x1="337.5" y1="217.0" x2="337.5" y2="220.5" stroke="#0cdc0c" stroke-width="1"/><line x1="342.5" y1="217.3" x2="342.5" y2="219.6" stroke="#0cdc0c" stroke-width="1"/><line x1="350.5" y1="219.4" x2="350.5" y2="222.5" stroke="#0cdc0c" stroke-width="1"/><line x1="359.5" y1="220.6" x2="359.5" y2="222.8" stroke="#0cdc0c" stroke-width="1"/><line x1="365.5" y1="220.9" x2="365.5" y2="225.1" stroke="#0cdc0c" stroke-width="1"/><line x1="373.5" y1="223.2" x2="373.5" y2="225.5" stroke="#0cdc0c" stroke-width="1"/><line x1="377.5" y1="224.4" x2="377.5" y2="227.8" stroke="#0cdc0c" stroke-width="1"/><rect x="384" y="141" width="1" height="134" fill="#6a6a6a"/><rect x="385" y="141" width="1" height="134" fill="#e6e6e6"/></g><g><rect x="46" y="301" width="422" height="137" fill="#000"/><rect x="48" y="303" width="418" height="134" fill="url(#bg)"/><rect x="58" y="303" width="1" height="134" fill="#00009c"/><rect x="68" y="303" width="1" height="134" fill="#00009c"/><rect x="79" y="303" width="1" height="134" fill="#00009c"/><rect x="89" y="303" width="1" height="134" fill="#00009c"/><rect x="100" y="303" width="1" height="134" fill="#0000ff"/><rect x="110" y="303" width="1" height="134" fill="#00009c"/><rect x="121" y="303" width="1" height="134" fill="#00009c"/><rect x="131" y="303" width="1" height="134" fill="#00009c"/><rect x="142" y="303" width="1" height="134" fill="#00009c"/><rect x="152" y="303" width="1" height="134" fill="#0000ff"/><rect x="162" y="303" width="1" height="134" fill="#00009c"/><rect x="173" y="303" width="1" height="134" fill="#00009c"/><rect x="183" y="303" width="1" height="134" fill="#00009c"/><rect x="194" y="303" width="1" height="134" fill="#00009c"/><rect x="204" y="303" width="1" height="134" fill="#0000ff"/><rect x="215" y="303" width="1" height="134" fill="#00009c"/><rect x="225" y="303" width="1" height="134" fill="#00009c"/><rect x="236" y="303" width="1" height="134" fill="#00009c"/><rect x="246" y="303" width="1" height="134" fill="#00009c"/><rect x="257" y="303" width="1" height="134" fill="#0000ff"/><rect x="267" y="303" width="1" height="134" fill="#00009c"/><rect x="277" y="303" width="1" height="134" fill="#00009c"/><rect x="288" y="303" width="1" height="134" fill="#00009c"/><rect x="298" y="303" width="1" height="134" fill="#00009c"/><rect x="309" y="303" width="1" height="134" fill="#0000ff"/><rect x="319" y="303" width="1" height="134" fill="#00009c"/><rect x="330" y="303" width="1" height="134" fill="#00009c"/><rect x="340" y="303" width="1" height="134" fill="#00009c"/><rect x="351" y="303" width="1" height="134" fill="#00009c"/><rect x="361" y="303" width="1" height="134" fill="#0000ff"/><rect x="371" y="303" width="1" height="134" fill="#00009c"/><rect x="382" y="303" width="1" height="134" fill="#00009c"/><rect x="392" y="303" width="1" height="134" fill="#00009c"/><rect x="403" y="303" width="1" height="134" fill="#00009c"/><rect x="413" y="303" width="1" height="134" fill="#0000ff"/><rect x="424" y="303" width="1" height="134" fill="#00009c"/><rect x="434" y="303" width="1" height="134" fill="#00009c"/><rect x="445" y="303" width="1" height="134" fill="#00009c"/><rect x="455" y="303" width="1" height="134" fill="#00009c"/><rect x="45" y="303" width="421" height="1" fill="#0000ff"/><rect x="46" y="317" width="420" height="1" fill="#00009c"/><rect x="45" y="330" width="421" height="1" fill="#0000ff"/><rect x="46" y="343" width="420" height="1" fill="#00009c"/><rect x="45" y="357" width="421" height="1" fill="#0000ff"/><rect x="46" y="370" width="420" height="1" fill="#00009c"/><rect x="45" y="383" width="421" height="1" fill="#0000ff"/><rect x="46" y="397" width="420" height="1" fill="#00009c"/><rect x="45" y="410" width="421" height="1" fill="#0000ff"/><rect x="46" y="423" width="420" height="1" fill="#00009c"/><rect x="45" y="436" width="421" height="1" fill="#0000ff"/><rect x="49" y="422.7" width="1" height="13.3" fill="#70ff00"/><rect x="51" y="422.7" width="1" height="13.3" fill="#70ff00"/><rect x="54" y="422.7" width="1" height="13.3" fill="#70ff00"/><rect x="60" y="422.7" width="1" height="13.3" fill="#70ff00"/><rect x="62" y="422.7" width="1" height="13.3" fill="#70ff00"/><rect x="68" y="422.7" width="1" height="13.3" fill="#70ff00"/><rect x="93" y="422.7" width="1" height="13.3" fill="#70ff00"/><rect x="103" y="422.7" width="1" height="13.3" fill="#70ff00"/><rect x="107" y="422.7" width="1" height="13.3" fill="#70ff00"/><rect x="110" y="422.7" width="1" height="13.3" fill="#70ff00"/><rect x="113" y="422.7" width="1" height="13.3" fill="#70ff00"/><rect x="121" y="422.7" width="1" height="13.3" fill="#70ff00"/><rect x="128" y="422.7" width="1" height="13.3" fill="#70ff00"/><rect x="129" y="422.7" width="1" height="13.3" fill="#70ff00"/><rect x="135" y="422.7" width="1" height="13.3" fill="#70ff00"/><rect x="151" y="422.7" width="1" height="13.3" fill="#70ff00"/><rect x="149" y="422.7" width="1" height="13.3" fill="#70ff00"/><rect x="155" y="422.7" width="1" height="13.3" fill="#70ff00"/><rect x="160" y="422.7" width="1" height="13.3" fill="#70ff00"/><rect x="163" y="422.7" width="1" height="13.3" fill="#70ff00"/><rect x="166" y="422.7" width="1" height="13.3" fill="#70ff00"/><rect x="175" y="422.7" width="1" height="13.3" fill="#70ff00"/><rect x="176" y="422.7" width="1" height="13.3" fill="#70ff00"/><rect x="177" y="422.7" width="1" height="13.3" fill="#70ff00"/><rect x="184" y="422.7" width="1" height="13.3" fill="#70ff00"/><rect x="193" y="422.7" width="1" height="13.3" fill="#70ff00"/><rect x="204" y="422.7" width="1" height="13.3" fill="#70ff00"/><rect x="207" y="422.7" width="1" height="13.3" fill="#70ff00"/><rect x="224" y="422.7" width="1" height="13.3" fill="#70ff00"/><rect x="233" y="422.7" width="1" height="13.3" fill="#70ff00"/><rect x="237" y="422.7" width="1" height="13.3" fill="#70ff00"/><rect x="249" y="422.7" width="1" height="13.3" fill="#70ff00"/><rect x="249" y="422.7" width="1" height="13.3" fill="#70ff00"/><rect x="252" y="422.7" width="1" height="13.3" fill="#70ff00"/><rect x="265" y="422.7" width="1" height="13.3" fill="#70ff00"/><rect x="266" y="422.7" width="1" height="13.3" fill="#70ff00"/><rect x="271" y="422.7" width="1" height="13.3" fill="#70ff00"/><rect x="273" y="422.7" width="1" height="13.3" fill="#70ff00"/><rect x="288" y="422.7" width="1" height="13.3" fill="#70ff00"/><rect x="293" y="422.7" width="1" height="13.3" fill="#70ff00"/><rect x="299" y="422.7" width="1" height="13.3" fill="#70ff00"/><rect x="318" y="422.7" width="1" height="13.3" fill="#70ff00"/><rect x="320" y="422.7" width="1" height="13.3" fill="#70ff00"/><rect x="325" y="422.7" width="1" height="13.3" fill="#70ff00"/><rect x="329" y="422.7" width="1" height="13.3" fill="#70ff00"/><rect x="332" y="422.7" width="1" height="13.3" fill="#70ff00"/><rect x="335" y="422.7" width="1" height="13.3" fill="#70ff00"/><rect x="337" y="422.7" width="1" height="13.3" fill="#70ff00"/><rect x="340" y="422.7" width="1" height="13.3" fill="#70ff00"/><rect x="343" y="422.7" width="1" height="13.3" fill="#70ff00"/><rect x="335" y="422.7" width="1" height="13.3" fill="#70ff00"/><rect x="336" y="422.7" width="1" height="13.3" fill="#70ff00"/><rect x="337" y="422.7" width="1" height="13.3" fill="#70ff00"/><rect x="338" y="422.7" width="1" height="13.3" fill="#70ff00"/><rect x="340" y="422.7" width="1" height="13.3" fill="#70ff00"/><rect x="344" y="422.7" width="1" height="13.3" fill="#70ff00"/><rect x="354" y="422.7" width="1" height="13.3" fill="#70ff00"/><rect x="358" y="422.7" width="1" height="13.3" fill="#70ff00"/><rect x="368" y="422.7" width="1" height="13.3" fill="#70ff00"/><rect x="375" y="422.7" width="1" height="13.3" fill="#70ff00"/><rect x="385" y="422.7" width="1" height="13.3" fill="#70ff00"/><rect x="100" y="387.5" width="1" height="48.5" fill="#70ff00"/><rect x="137" y="397.4" width="1" height="38.6" fill="#70ff00"/><rect x="172" y="396.1" width="1" height="39.9" fill="#70ff00"/><rect x="177" y="396.1" width="1" height="39.9" fill="#70ff00"/><rect x="229" y="396.1" width="1" height="39.9" fill="#70ff00"/><rect x="237" y="409.4" width="1" height="26.6" fill="#70ff00"/><rect x="257" y="342.9" width="1" height="93.1" fill="#70ff00"/><rect x="262" y="342.9" width="1" height="93.1" fill="#70ff00"/><rect x="256" y="356.2" width="3" height="79.8" fill="#70ff00"/><rect x="260" y="382.8" width="5" height="53.2" fill="#70ff00"/><rect x="265" y="422.7" width="1" height="13.3" fill="#70ff00"/><rect x="273" y="409.4" width="1" height="26.6" fill="#70ff00"/><rect x="275" y="409.4" width="2" height="26.6" fill="#70ff00"/><rect x="280" y="409.4" width="4" height="26.6" fill="#70ff00"/><rect x="309" y="409.4" width="2" height="26.6" fill="#70ff00"/><rect x="311" y="396.1" width="1" height="39.9" fill="#70ff00"/><rect x="323" y="396.1" width="1" height="39.9" fill="#70ff00"/><rect x="333" y="396.1" width="1" height="39.9" fill="#70ff00"/><rect x="336" y="396.1" width="1" height="39.9" fill="#70ff00"/><rect x="332" y="409.4" width="2" height="26.6" fill="#70ff00"/><rect x="342" y="409.4" width="2" height="26.6" fill="#70ff00"/><rect x="325" y="409.4" width="1" height="26.6" fill="#70ff00"/><rect x="346" y="396.1" width="1" height="39.9" fill="#70ff00"/><rect x="350" y="369.5" width="2" height="66.5" fill="#70ff00"/><rect x="356" y="409.4" width="1" height="26.6" fill="#70ff00"/><rect x="365" y="369.5" width="1" height="66.5" fill="#70ff00"/><rect x="367" y="369.5" width="1" height="66.5" fill="#70ff00"/><rect x="370" y="396.1" width="1" height="39.9" fill="#70ff00"/><rect x="378" y="409.4" width="1" height="26.6" fill="#70ff00"/><path d="M48 385.4h1V388.6h-1ZM49 383.5h1V387.1h-1ZM50 383.2h1V385.3h-1ZM51 384.4h1V388.7h-1ZM52 383.2h1V386.5h-1ZM53 384.4h1V387.6h-1ZM54 382.5h1V385.6h-1ZM55 382.8h1V387.3h-1ZM56 382.9h1V386.5h-1ZM57 385.0h1V388.9h-1ZM58 385.5h1V389.3h-1ZM59 385.2h1V388.8h-1ZM60 383.9h1V391.2h-1ZM61 383.7h1V385.5h-1ZM62 384.1h1V389.7h-1ZM63 384.1h1V391.6h-1ZM64 383.1h1V387.5h-1ZM65 382.1h1V386.7h-1ZM66 383.3h1V389.5h-1ZM67 384.7h1V388.8h-1ZM68 384.0h1V386.0h-1ZM69 383.4h1V388.9h-1ZM70 383.0h1V386.4h-1ZM71 385.4h1V389.3h-1ZM72 382.7h1V386.5h-1ZM73 383.2h1V386.9h-1ZM74 385.6h1V389.0h-1ZM75 383.0h1V386.3h-1ZM76 382.5h1V385.8h-1ZM77 383.1h1V386.1h-1ZM78 382.6h1V386.2h-1ZM79 384.6h1V387.2h-1ZM80 382.3h1V386.4h-1ZM81 384.6h1V387.5h-1ZM82 385.8h1V391.7h-1ZM83 382.6h1V386.6h-1ZM84 385.4h1V388.4h-1ZM85 384.4h1V388.3h-1ZM86 384.0h1V387.4h-1ZM87 385.3h1V387.9h-1ZM88 384.8h1V387.5h-1ZM89 383.7h1V386.2h-1ZM90 385.3h1V387.7h-1ZM91 383.4h1V386.2h-1ZM92 378.9h1V386.8h-1ZM93 383.0h1V387.0h-1ZM94 384.8h1V387.5h-1ZM95 383.3h1V388.9h-1ZM96 384.6h1V388.2h-1ZM97 384.5h1V387.4h-1ZM98 384.1h1V387.9h-1ZM99 384.9h1V387.6h-1ZM100 384.7h1V388.8h-1ZM101 384.3h1V387.8h-1ZM102 385.0h1V387.5h-1ZM103 384.4h1V387.5h-1ZM104 383.7h1V387.0h-1ZM105 385.8h1V388.9h-1ZM106 383.7h1V391.2h-1ZM107 382.5h1V387.1h-1ZM108 382.7h1V386.2h-1ZM109 383.8h1V387.9h-1ZM110 383.0h1V386.5h-1ZM111 383.3h1V386.3h-1ZM112 384.3h1V386.5h-1ZM113 382.7h1V385.7h-1ZM114 383.9h1V386.4h-1ZM115 385.3h1V388.1h-1ZM116 384.1h1V386.4h-1ZM117 384.7h1V388.2h-1ZM118 382.4h1V386.2h-1ZM119 384.5h1V388.2h-1ZM120 384.7h1V388.0h-1ZM121 385.4h1V388.1h-1ZM122 384.3h1V386.2h-1ZM123 383.8h1V386.3h-1ZM124 383.6h1V387.4h-1ZM125 384.7h1V387.8h-1ZM126 384.8h1V387.9h-1ZM127 385.2h1V386.8h-1ZM128 382.9h1V387.1h-1ZM129 385.1h1V387.5h-1ZM130 385.4h1V388.9h-1ZM131 384.6h1V388.9h-1ZM132 385.5h1V388.7h-1ZM133 384.8h1V388.7h-1ZM134 383.7h1V385.9h-1ZM135 382.7h1V385.3h-1ZM136 383.9h1V392.0h-1ZM137 383.8h1V387.5h-1ZM138 383.8h1V391.3h-1ZM139 385.2h1V387.9h-1ZM140 385.6h1V389.5h-1ZM141 383.3h1V386.4h-1ZM142 384.6h1V388.3h-1ZM143 383.9h1V387.7h-1ZM144 383.9h1V387.2h-1ZM145 382.9h1V386.5h-1ZM146 383.3h1V387.5h-1ZM147 385.1h1V387.8h-1ZM148 384.0h1V391.9h-1ZM149 385.1h1V387.6h-1ZM150 383.0h1V386.6h-1ZM151 384.0h1V388.5h-1ZM152 384.1h1V388.0h-1ZM153 385.0h1V388.1h-1ZM154 385.4h1V391.5h-1ZM155 385.0h1V388.3h-1ZM156 384.8h1V387.7h-1ZM157 384.1h1V386.9h-1ZM158 385.9h1V391.0h-1ZM159 384.8h1V389.0h-1ZM160 382.7h1V386.0h-1ZM161 382.7h1V388.6h-1ZM162 383.7h1V389.3h-1ZM163 382.1h1V385.4h-1ZM164 383.7h1V386.6h-1ZM165 385.0h1V387.2h-1ZM166 384.1h1V391.9h-1ZM167 384.7h1V388.7h-1ZM168 385.0h1V391.4h-1ZM169 385.6h1V387.9h-1ZM170 382.4h1V389.2h-1ZM171 381.2h1V387.8h-1ZM172 383.4h1V387.1h-1ZM173 383.2h1V387.8h-1ZM174 384.5h1V386.7h-1ZM175 384.1h1V387.6h-1ZM176 384.9h1V388.9h-1ZM177 383.2h1V386.9h-1ZM178 383.7h1V388.2h-1ZM179 382.9h1V385.7h-1ZM180 384.3h1V387.4h-1ZM181 384.3h1V388.4h-1ZM182 384.6h1V388.7h-1ZM183 384.2h1V386.9h-1ZM184 382.7h1V387.2h-1ZM185 384.0h1V387.6h-1ZM186 382.9h1V387.1h-1ZM187 382.3h1V386.6h-1ZM188 383.6h1V388.2h-1ZM189 383.8h1V386.7h-1ZM190 382.7h1V386.1h-1ZM191 383.7h1V390.9h-1ZM192 384.3h1V387.2h-1ZM193 382.8h1V386.0h-1ZM194 383.3h1V386.7h-1ZM195 383.9h1V386.8h-1ZM196 383.1h1V387.6h-1ZM197 385.8h1V387.9h-1ZM198 383.7h1V386.5h-1ZM199 385.1h1V389.2h-1ZM200 379.1h1V386.2h-1ZM201 383.2h1V386.8h-1ZM202 384.7h1V387.7h-1ZM203 384.6h1V390.8h-1ZM204 382.9h1V387.6h-1ZM205 382.2h1V386.3h-1ZM206 384.7h1V388.1h-1ZM207 385.0h1V388.3h-1ZM208 385.4h1V387.8h-1ZM209 382.9h1V385.9h-1ZM210 382.6h1V385.4h-1ZM211 383.8h1V387.2h-1ZM212 382.3h1V389.3h-1ZM213 382.1h1V386.7h-1ZM214 384.1h1V387.7h-1ZM215 385.0h1V391.0h-1ZM216 384.7h1V388.1h-1ZM217 384.3h1V386.6h-1ZM218 384.0h1V386.8h-1ZM219 385.6h1V393.6h-1ZM220 385.0h1V387.8h-1ZM221 383.8h1V386.3h-1ZM222 384.8h1V388.1h-1ZM223 385.9h1V388.9h-1ZM224 386.2h1V389.3h-1ZM225 383.7h1V386.8h-1ZM226 383.2h1V387.1h-1ZM227 384.8h1V386.9h-1ZM228 385.1h1V390.7h-1ZM229 384.3h1V386.8h-1ZM230 384.1h1V388.1h-1ZM231 382.3h1V385.8h-1ZM232 382.2h1V385.7h-1ZM233 384.8h1V387.5h-1ZM234 383.3h1V386.8h-1ZM235 385.2h1V387.7h-1ZM236 385.1h1V387.6h-1ZM237 384.7h1V387.7h-1ZM238 385.4h1V388.8h-1ZM239 385.5h1V388.7h-1ZM240 384.0h1V387.3h-1ZM241 381.8h1V385.4h-1ZM242 383.2h1V388.9h-1ZM243 384.9h1V387.0h-1ZM244 381.0h1V387.9h-1ZM245 385.4h1V387.3h-1ZM246 384.4h1V386.6h-1ZM247 380.1h1V386.9h-1ZM248 385.0h1V388.6h-1ZM249 383.8h1V387.6h-1ZM250 383.0h1V387.5h-1ZM251 383.5h1V386.4h-1ZM252 384.3h1V388.8h-1ZM253 382.6h1V386.8h-1ZM254 383.4h1V386.8h-1ZM255 384.8h1V387.3h-1ZM256 383.1h1V386.7h-1ZM257 375.5h1V383.7h-1ZM258 376.3h1V379.1h-1ZM259 375.5h1V378.5h-1ZM260 375.5h1V378.5h-1ZM261 376.6h1V379.3h-1ZM262 373.9h1V378.1h-1ZM263 372.9h1V378.0h-1ZM264 374.7h1V377.5h-1ZM265 375.6h1V378.3h-1ZM266 376.1h1V379.8h-1ZM267 376.8h1V380.1h-1ZM268 376.5h1V379.0h-1ZM269 376.7h1V382.8h-1ZM270 378.1h1V381.1h-1ZM271 375.4h1V379.1h-1ZM272 376.7h1V379.9h-1ZM273 376.0h1V379.1h-1ZM274 376.6h1V380.3h-1ZM275 376.8h1V379.5h-1ZM276 377.5h1V382.0h-1ZM277 378.2h1V382.4h-1ZM278 375.4h1V383.0h-1ZM279 376.4h1V380.3h-1ZM280 378.9h1V383.0h-1ZM281 379.6h1V382.9h-1ZM282 378.4h1V381.6h-1ZM283 379.4h1V382.2h-1ZM284 380.3h1V383.5h-1ZM285 379.9h1V382.7h-1ZM286 378.0h1V381.6h-1ZM287 380.2h1V383.7h-1ZM288 381.9h1V383.6h-1ZM289 379.2h1V383.7h-1ZM290 381.4h1V384.7h-1ZM291 379.8h1V383.0h-1ZM292 378.7h1V384.6h-1ZM293 379.5h1V383.0h-1ZM294 381.3h1V384.5h-1ZM295 381.6h1V384.7h-1ZM296 379.2h1V383.1h-1ZM297 380.6h1V383.9h-1ZM298 380.1h1V384.9h-1ZM299 379.2h1V382.2h-1ZM300 379.5h1V382.5h-1ZM301 378.7h1V386.0h-1ZM302 381.1h1V387.2h-1ZM303 380.8h1V384.5h-1ZM304 379.8h1V382.8h-1ZM305 379.2h1V383.4h-1ZM306 377.6h1V382.5h-1ZM307 378.9h1V382.8h-1ZM308 381.0h1V383.2h-1ZM309 379.0h1V382.4h-1ZM310 379.8h1V383.2h-1ZM311 379.5h1V386.8h-1ZM312 379.4h1V383.3h-1ZM313 379.9h1V383.2h-1ZM314 378.7h1V383.2h-1ZM315 379.5h1V383.5h-1ZM316 379.3h1V382.8h-1ZM317 378.7h1V382.6h-1ZM318 379.7h1V382.2h-1ZM319 379.1h1V384.7h-1ZM320 376.6h1V382.4h-1ZM321 379.9h1V382.2h-1ZM322 379.9h1V382.7h-1ZM323 378.5h1V381.4h-1ZM324 381.0h1V384.1h-1ZM325 381.4h1V383.9h-1ZM326 378.8h1V382.3h-1ZM327 377.4h1V383.1h-1ZM328 378.5h1V382.6h-1ZM329 379.0h1V381.9h-1ZM330 378.7h1V382.1h-1ZM331 380.9h1V384.3h-1ZM332 379.5h1V381.9h-1ZM333 378.6h1V384.5h-1ZM334 379.5h1V385.2h-1ZM335 379.7h1V382.8h-1ZM336 379.0h1V383.4h-1ZM337 381.6h1V387.6h-1ZM338 380.6h1V383.5h-1ZM339 380.9h1V384.4h-1ZM340 380.8h1V382.9h-1ZM341 380.3h1V385.5h-1ZM342 379.3h1V384.9h-1ZM343 380.8h1V384.2h-1ZM344 380.9h1V383.7h-1ZM345 380.2h1V383.3h-1ZM346 380.0h1V383.2h-1ZM347 379.0h1V381.1h-1ZM348 378.4h1V386.5h-1ZM349 379.2h1V383.5h-1ZM350 378.0h1V381.8h-1ZM351 380.1h1V384.4h-1ZM352 380.5h1V383.4h-1ZM353 379.3h1V382.6h-1ZM354 378.2h1V382.4h-1ZM355 379.3h1V383.6h-1ZM356 379.9h1V382.2h-1ZM357 379.3h1V381.7h-1ZM358 380.8h1V383.2h-1ZM359 379.0h1V382.8h-1ZM360 381.6h1V384.5h-1ZM361 380.8h1V384.6h-1ZM362 380.2h1V383.6h-1ZM363 381.5h1V383.8h-1ZM364 379.7h1V382.0h-1ZM365 380.6h1V383.1h-1ZM366 380.0h1V384.5h-1ZM367 381.0h1V383.9h-1ZM368 381.2h1V383.9h-1ZM369 380.2h1V387.4h-1ZM370 380.1h1V384.4h-1ZM371 379.6h1V385.7h-1ZM372 381.2h1V383.7h-1ZM373 380.3h1V383.6h-1ZM374 380.5h1V383.9h-1ZM375 381.2h1V383.9h-1ZM376 379.0h1V385.8h-1ZM377 379.8h1V384.0h-1ZM378 381.2h1V384.5h-1ZM379 379.2h1V382.3h-1ZM380 379.0h1V385.1h-1ZM381 380.2h1V387.5h-1ZM382 380.5h1V384.1h-1ZM383 380.4h1V383.5h-1Z" fill="#ff00ff"/><rect x="383" y="378" width="1.5" height="7" fill="#ff00ff"/><line x1="182.5" y1="385" x2="182.5" y2="412" stroke="#ff00ff" stroke-width="1"/><line x1="182.5" y1="412" x2="182.5" y2="436" stroke="#ff00ff" stroke-width="1.6"/><line x1="217.5" y1="376" x2="217.5" y2="386" stroke="#ff00ff" stroke-width="1"/><line x1="270.5" y1="363" x2="270.5" y2="378" stroke="#ff00ff" stroke-width="1.2"/><line x1="307.5" y1="381" x2="307.5" y2="436" stroke="#ff00ff" stroke-width="1.2"/><line x1="256.5" y1="376" x2="256.5" y2="436" stroke="#ff00ff" stroke-width="1.2"/><line x1="339.5" y1="381" x2="339.5" y2="390" stroke="#ff00ff" stroke-width="1"/><line x1="140.5" y1="373" x2="140.5" y2="386" stroke="#ff00ff" stroke-width="1.2"/><rect x="384" y="303" width="1" height="134" fill="#6a6a6a"/><rect x="385" y="303" width="1" height="134" fill="#e6e6e6"/></g></svg><div class="ax" style="right:600px;top:133.0px;transform-origin:100% 50%">100</div><div class="ax" style="right:600px;top:159.6px;transform-origin:100% 50%">80</div><div class="ax" style="right:600px;top:186.2px;transform-origin:100% 50%">60</div><div class="ax" style="right:600px;top:212.8px;transform-origin:100% 50%">40</div><div class="ax" style="right:600px;top:239.4px;transform-origin:100% 50%">20</div><div class="ax" style="right:600px;top:295.0px;transform-origin:100% 50%">10</div><div class="ax" style="right:600px;top:321.6px;transform-origin:100% 50%">8</div><div class="ax" style="right:600px;top:348.2px;transform-origin:100% 50%">6</div><div class="ax" style="right:600px;top:374.8px;transform-origin:100% 50%">4</div><div class="ax" style="right:600px;top:401.4px;transform-origin:100% 50%">2</div><div class="ax" style="left:471px;top:133.0px;transform-origin:0 50%">16</div><div class="ax" style="left:471px;top:149.625px;transform-origin:0 50%">14</div><div class="ax" style="left:471px;top:166.25px;transform-origin:0 50%">12</div><div class="ax" style="left:471px;top:182.875px;transform-origin:0 50%">10</div><div class="ax" style="left:471px;top:199.5px;transform-origin:0 50%">8</div><div class="ax" style="left:471px;top:216.125px;transform-origin:0 50%">6</div><div class="ax" style="left:471px;top:232.75px;transform-origin:0 50%">4</div><div class="ax" style="left:471px;top:249.375px;transform-origin:0 50%">2</div><div class="ax" style="left:471px;top:295.0px;transform-origin:0 50%">20</div><div class="ax" style="left:471px;top:321.6px;transform-origin:0 50%">16</div><div class="ax" style="left:471px;top:348.2px;transform-origin:0 50%">12</div><div class="ax" style="left:471px;top:374.8px;transform-origin:0 50%">8</div><div class="ax" style="left:471px;top:401.4px;transform-origin:0 50%">4</div><div class="ax" style="left:30px;width:40px;text-align:center;top:277px">0.0</div><div class="ax" style="left:82px;width:40px;text-align:center;top:277px">1.0</div><div class="ax" style="left:134px;width:40px;text-align:center;top:277px">2.0</div><div class="ax" style="left:187px;width:40px;text-align:center;top:277px">3.0</div><div class="ax" style="left:239px;width:40px;text-align:center;top:277px">4.0</div><div class="ax" style="left:291px;width:40px;text-align:center;top:277px">5.0</div><div class="ax" style="left:344px;width:40px;text-align:center;top:277px">6.0</div><div class="ax" style="left:396px;width:40px;text-align:center;top:277px">7.0</div><div class="ax" style="left:448px;width:40px;text-align:center;top:277px">8.0</div><div class="ax" style="left:30px;width:40px;text-align:center;top:439px">0.0</div><div class="ax" style="left:82px;width:40px;text-align:center;top:439px">1.0</div><div class="ax" style="left:134px;width:40px;text-align:center;top:439px">2.0</div><div class="ax" style="left:187px;width:40px;text-align:center;top:439px">3.0</div><div class="ax" style="left:239px;width:40px;text-align:center;top:439px">4.0</div><div class="ax" style="left:291px;width:40px;text-align:center;top:439px">5.0</div><div class="ax" style="left:344px;width:40px;text-align:center;top:439px">6.0</div><div class="ax" style="left:396px;width:40px;text-align:center;top:439px">7.0</div><div class="ax" style="left:448px;width:40px;text-align:center;top:439px">8.0</div>
<div class="gb" style="left:491px;top:136px;width:140px;height:82px"></div>
<div class="lg" style="left:498px;top:128px">Disc info</div>
<div class="t" style="left:503px;top:143px">Type:</div><div class="t nv" style="left:543px;top:143px">DVD-R DL</div>
<div class="t" style="left:503px;top:160px">ID:</div><div class="t nv" style="left:543px;top:160px">MKM 01RD30</div>
<div class="t" style="left:503px;top:178px">Date:</div><div class="t nv" style="left:543px;top:178px">n/a</div>
<div class="t" style="left:503px;top:195px">Label:</div><div class="t nv" style="left:543px;top:195px">NIGHT_WATCH</div>

<div class="gb" style="left:491px;top:226px;width:140px;height:204px"></div>
<div class="lg" style="left:498px;top:219px;background:#fafaf8">Settings</div>
<div class="t" style="left:499px;top:234px">Speed:</div>
<div class="combo" style="left:500px;top:250px;width:84px;height:21px"><div class="t n1" style="left:3px;top:3px;font-size:11.5px">8 X</div><div class="dd" style="right:1px;top:1px;width:15px;height:17px"><svg style="left:2px;top:5px" width="9" height="6" viewBox="0 0 9 6"><path d="M0.7 0.7L4.5 4.5L8.3 0.7" fill="none" stroke="#4d6185" stroke-width="2"/></svg></div></div>
<div style="left:592px;top:248px;width:23px;height:23px;background:#ece9d8;border:1px solid;border-color:#fff #716f64 #716f64 #fff;box-shadow:inset -1px -1px 0 #aca899"><div style="left:3px;top:2px;width:14px;height:16px;border:1px solid #000;background:#fff"><svg style="left:0;top:0" width="12" height="14" viewBox="0 0 12 14"><path d="M7 3.5H4.8Q3 3.5 3 5.5V7" fill="none" stroke="#008c00" stroke-width="1.3"/><path d="M6.2 1L9.3 3.5L6.2 6Z" fill="#008c00"/><path d="M5 10.5H7.2Q9 10.5 9 8.5V7" fill="none" stroke="#008c00" stroke-width="1.3"/><path d="M5.8 8L2.7 10.5L5.8 13Z" fill="#008c00"/></svg></div></div>
<div class="t" style="left:503px;top:281px">Start:</div>
<div class="inp" style="left:554px;top:276px;width:60px;height:20px"><div class="t" style="left:3px;top:2px;font-size:11.5px;transform:scaleX(.93)">0000 MB</div></div>
<div class="t" style="left:503px;top:303px">End:</div>
<div class="inp" style="left:554px;top:299px;width:60px;height:20px"><div class="t" style="left:3px;top:2px;font-size:11.5px;transform:scaleX(.93)">6610 MB</div></div>

<div class="cb" style="left:502px;top:324px"></div><div class="t ck" style="left:518px;top:323px">Quick scan</div>
<div class="cb" style="left:502px;top:345px"><svg style="left:1px;top:1px" width="9" height="9" viewBox="0 0 9 9"><path d="M1 3.5L3.5 6L8 1.5" fill="none" stroke="#21a121" stroke-width="2"/></svg></div><div class="t ck" style="left:518px;top:344px">Show C1/PIE</div>
<div class="cb" style="left:502px;top:361px"><svg style="left:1px;top:1px" width="9" height="9" viewBox="0 0 9 9"><path d="M1 3.5L3.5 6L8 1.5" fill="none" stroke="#21a121" stroke-width="2"/></svg></div><div class="t ck" style="left:518px;top:360px">Show C2/PIF</div>
<div class="cb" style="left:502px;top:378px"><svg style="left:1px;top:1px" width="9" height="9" viewBox="0 0 9 9"><path d="M1 3.5L3.5 6L8 1.5" fill="none" stroke="#21a121" stroke-width="2"/></svg></div><div class="t ck" style="left:518px;top:377px">Show jitter</div>
<div class="cb" style="left:502px;top:394px"><svg style="left:1px;top:1px" width="9" height="9" viewBox="0 0 9 9"><path d="M1 3.5L3.5 6L8 1.5" fill="none" stroke="#21a121" stroke-width="2"/></svg></div><div class="t ck" style="left:518px;top:393px">Show read speed</div>
<div class="cb" style="left:502px;top:410px;border-color:#cac8bb;background:#fff"><svg style="left:1px;top:1px" width="9" height="9" viewBox="0 0 9 9"><path d="M1 3.5L3.5 6L8 1.5" fill="none" stroke="#cac8bb" stroke-width="2"/></svg></div><div class="t ck" style="left:518px;top:409px;color:#aca899">Show write speed</div>

<div class="gb" style="left:491px;top:435px;width:140px;height:27px"></div>
<div class="t" style="left:503px;top:442px">Quality score:</div><div class="t nv r" style="right:20px;top:442px">96</div>
<div class="gb" style="left:491px;top:468px;width:140px;height:56px"></div>
<div class="t" style="left:503px;top:476px">Progress:</div><div class="t nv r" style="right:20px;top:476px">100 %</div>
<div class="t" style="left:503px;top:491px">Position:</div><div class="t nv r" style="right:20px;top:491px">6609 MB</div>
<div class="t" style="left:503px;top:507px">Speed:</div><div class="t nv r" style="right:20px;top:507px">5.64 X</div>

<div class="sq" style="left:14px;top:468px;width:146px;height:56px"></div>
<div class="t" style="left:21px;top:461px;width:56px;background:#f5f4ef"></div>
<div style="left:24px;top:464px;width:8px;height:8px;border:1px solid #0000c0;background:#00ffff"></div>
<div class="t" style="left:36px;top:461px">PI Errors</div>
<div class="t" style="left:22px;top:477px">Average:</div><div class="t nv r" style="right:491px;top:477px">5.20</div>
<div class="t" style="left:22px;top:492px">Maximum:</div><div class="t nv r" style="right:491px;top:492px">63</div>
<div class="t" style="left:22px;top:506px">Total:</div><div class="t nv r" style="right:491px;top:506px">88836</div>

<div class="sq" style="left:172px;top:468px;width:146px;height:56px"></div>
<div class="t" style="left:179px;top:461px;width:65px;background:#f5f4ef"></div>
<div style="left:182px;top:464px;width:8px;height:8px;border:1px solid #0000c0;background:#ffff00"></div>
<div class="t" style="left:194px;top:461px">PI Failures</div>
<div class="t" style="left:181px;top:477px">Average:</div><div class="t nv r" style="right:332px;top:477px">0.07</div>
<div class="t" style="left:181px;top:492px">Maximum:</div><div class="t nv r" style="right:332px;top:492px">7</div>
<div class="t" style="left:181px;top:506px">Total:</div><div class="t nv r" style="right:332px;top:506px">1110</div>

<div class="sq" style="left:331px;top:468px;width:147px;height:41px"></div>
<div class="t" style="left:338px;top:461px;width:38px;background:#f5f4ef"></div>
<div style="left:341px;top:464px;width:8px;height:8px;border:1px solid #0000c0;background:#ff00ff"></div>
<div class="t" style="left:352px;top:461px">Jitter</div>
<div class="t" style="left:340px;top:477px">Average:</div><div class="t nv r" style="right:173px;top:477px">7.55 %</div>
<div class="t" style="left:340px;top:492px">Maximum:</div><div class="t nv r" style="right:173px;top:492px">10.9 %</div>
<div class="t" style="left:340px;top:510px">PO failures:</div><div class="t nv r" style="right:173px;top:510px">0</div>

</div>
</body></html>
